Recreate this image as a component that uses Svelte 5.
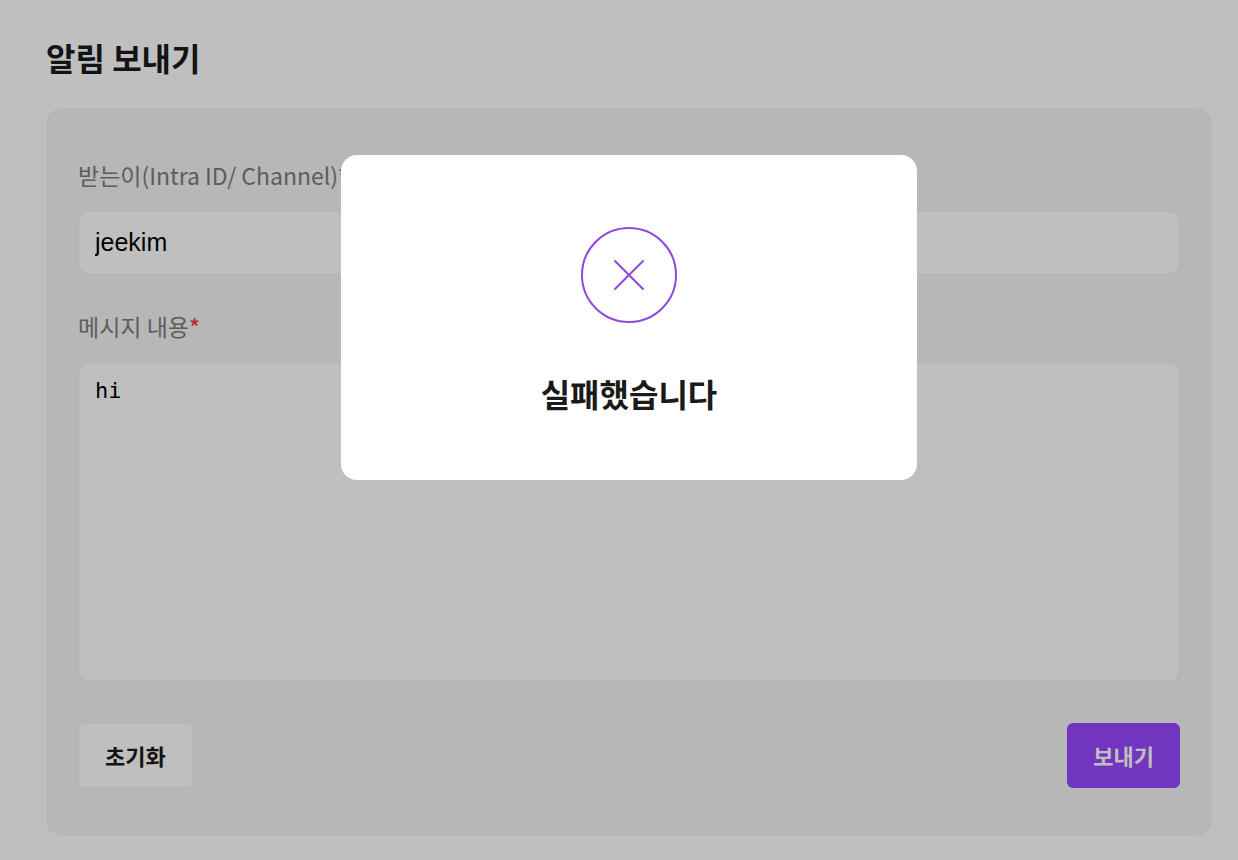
<script lang="ts">
  let recipient = $state("jeekim");
  let message = $state("hi");
  let failed = $state(true);

  function reset() {
    recipient = "";
    message = "";
  }

  function send(event: SubmitEvent) {
    event.preventDefault();
    failed = true;
  }

  function onKeyDown(event: KeyboardEvent) {
    if (event.key === "Escape") {
      failed = false;
    }
  }
</script>

<svelte:window onkeydown={onKeyDown} />

<main class="page">
  <h1>알림 보내기</h1>
  <form class="panel" onsubmit={send}>
    <label for="recipient">받는이(Intra ID/ Channel)<span class="required">*</span></label>
    <input id="recipient" type="text" bind:value={recipient} />
    <label for="message">메시지 내용<span class="required">*</span></label>
    <textarea id="message" bind:value={message}></textarea>
    <div class="actions">
      <button type="button" class="secondary" onclick={reset}>초기화</button>
      <button type="submit" class="primary">보내기</button>
    </div>
  </form>
</main>

{#if failed}
  <div class="overlay">
    <div class="dialog" role="alertdialog" aria-modal="true" aria-labelledby="dialog-title">
      <svg class="icon" viewBox="0 0 96 96" aria-hidden="true">
        <circle cx="48" cy="48" r="47" />
        <path d="M34 34l28 28M62 34l-28 28" />
      </svg>
      <h2 id="dialog-title">실패했습니다</h2>
    </div>
  </div>
{/if}

<style>
  :global(body) {
    margin: 0;
    background: #fff;
    font-family: "Noto Sans CJK KR", sans-serif;
  }

  .page {
    padding: 32px 26px 24px 46px;
  }

  h1,
  h2 {
    margin: 0;
    color: #1a1a1a;
    font-size: 32px;
    font-weight: 700;
    line-height: 50px;
  }

  .panel {
    display: flex;
    flex-direction: column;
    margin-top: 26px;
    padding: 48px 32px;
    border-radius: 16px;
    background: #f5f5f5;
  }

  label {
    margin-bottom: 16px;
    color: #7c7c7c;
    font-size: 23px;
    line-height: 39px;
  }

  .required {
    color: #f03e3e;
    font-weight: 500;
  }

  input,
  textarea {
    box-sizing: border-box;
    width: 100%;
    margin: 0;
    padding: 14px 16px 16px;
    border: 1px solid #f0f0f0;
    border-radius: 12px;
    outline: 0;
    background: #fff;
    color: #000;
    font-size: 25px;
    line-height: 28px;
  }

  input {
    height: 64px;
    margin-bottom: 32px;
    font-family: "Liberation Sans", Arial, sans-serif;
  }

  textarea {
    height: 320px;
    font-family: "DejaVu Sans Mono", monospace;
    font-size: 22px;
    resize: none;
  }

  .actions {
    display: flex;
    justify-content: space-between;
    margin-top: 41px;
  }

  button {
    height: 65px;
    padding: 0 26px 2px;
    border: 0;
    border-radius: 6px;
    font: 700 22px "Noto Sans CJK KR", sans-serif;
  }

  .secondary {
    border: 1px solid #f0f0f0;
    background: #fff;
    color: #1a1a1a;
  }

  .primary {
    background: #9747ff;
    color: #fff;
  }

  .overlay {
    position: fixed;
    inset: 0;
    padding: 155px 0 0 20px;
    background: rgb(0 0 0 / 25%);
  }

  .dialog {
    box-sizing: border-box;
    display: flex;
    flex-direction: column;
    align-items: center;
    width: 576px;
    max-width: 90%;
    margin: 0 auto;
    padding: 72px 32px 62px;
    border-radius: 16px;
    background: #fff;
  }

  .icon {
    width: 96px;
    height: 96px;
    margin-bottom: 45px;
    fill: none;
    stroke: #8f48dc;
    stroke-width: 2;
    stroke-linecap: round;
  }
</style>
